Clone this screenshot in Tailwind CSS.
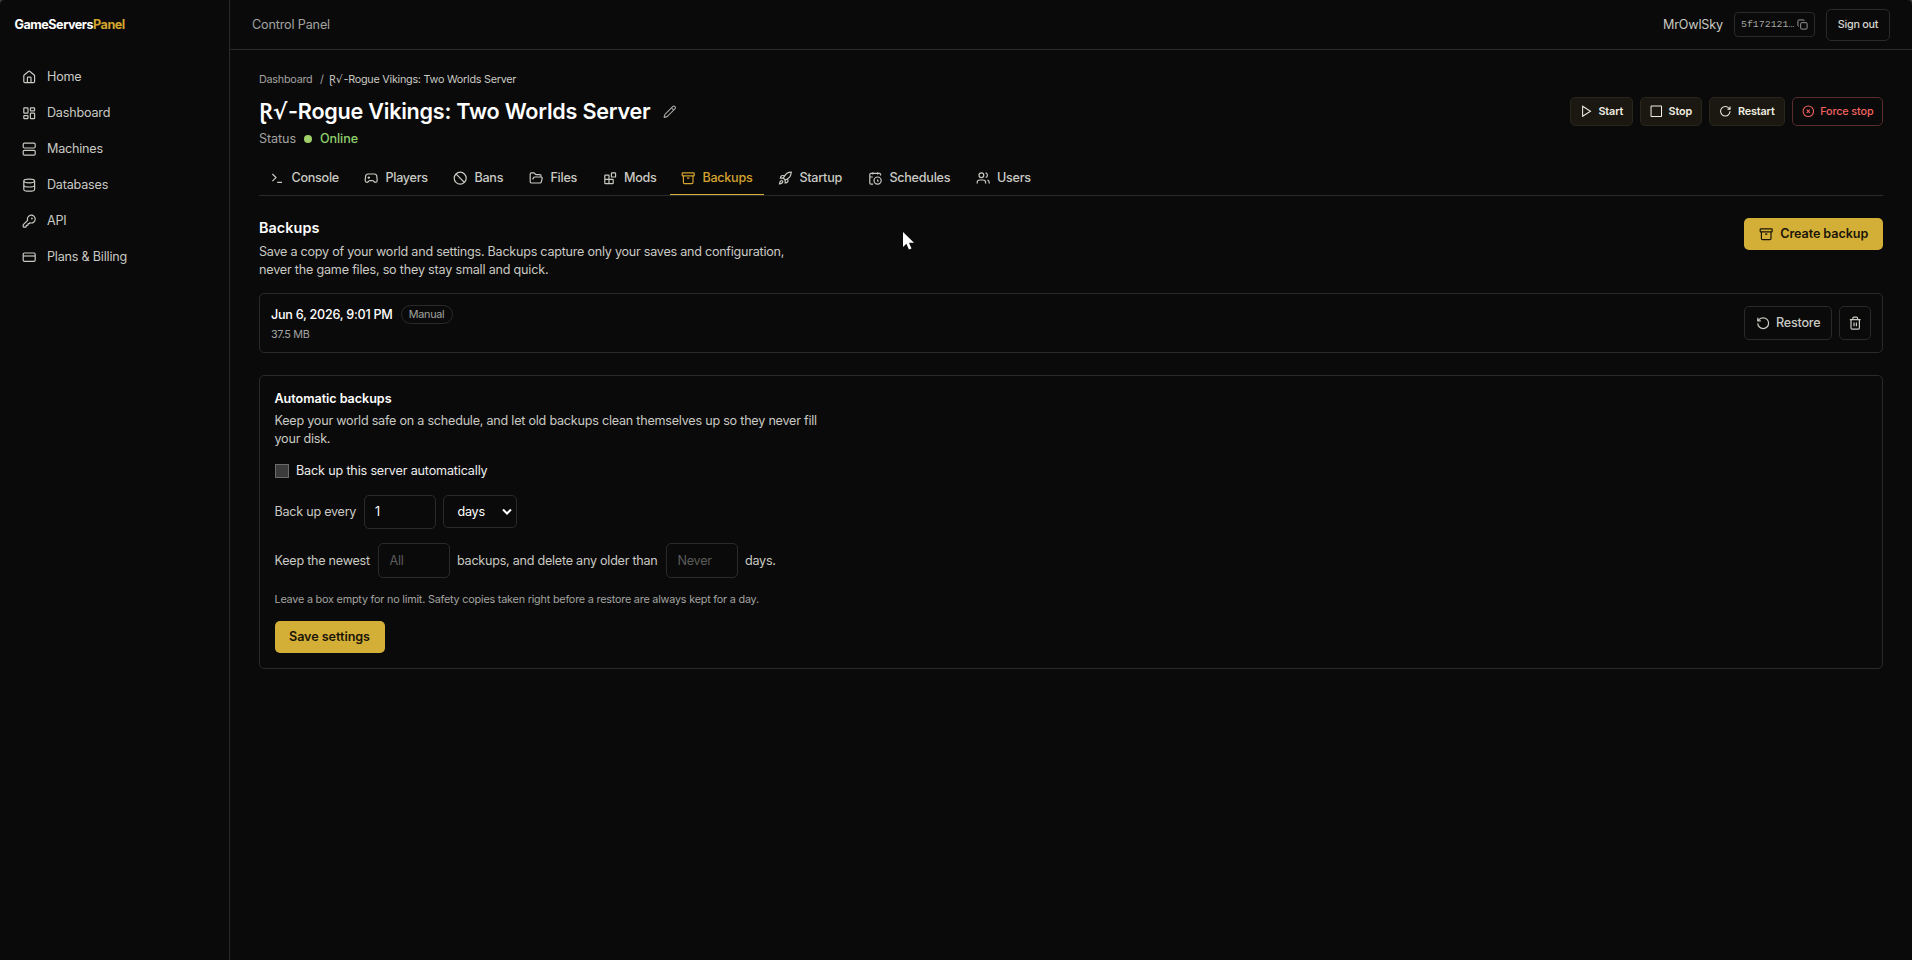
<!DOCTYPE html>
<html lang="en">
<head>
<meta charset="utf-8">
<title>GameServersPanel</title>
<script src="https://cdn.jsdelivr.net/npm/@tailwindcss/browser@4"></script>
</head>
<body class="bg-[#0a0a0a] font-['Inter',sans-serif] text-[12.6px] leading-[18px] tracking-[-0.25px] text-[#c9c9c3] overflow-hidden">
<svg class="hidden">
  <defs>
    <symbol id="home" viewBox="0 0 24 24"><path d="M15 21v-8a1 1 0 0 0-1-1h-4a1 1 0 0 0-1 1v8"/><path d="M3 10a2 2 0 0 1 .709-1.528l7-6a2 2 0 0 1 2.582 0l7 6A2 2 0 0 1 21 10v9a2 2 0 0 1-2 2H5a2 2 0 0 1-2-2z"/></symbol>
    <symbol id="dash" viewBox="0 0 24 24"><rect width="7" height="9" x="3" y="3" rx="1"/><rect width="7" height="5" x="14" y="3" rx="1"/><rect width="7" height="9" x="14" y="12" rx="1"/><rect width="7" height="5" x="3" y="16" rx="1"/></symbol>
    <symbol id="server" viewBox="0 0 24 24"><rect width="20" height="8" x="2" y="2" rx="2"/><rect width="20" height="8" x="2" y="14" rx="2"/><path d="M6 6h.01M6 18h.01"/></symbol>
    <symbol id="db" viewBox="0 0 24 24"><ellipse cx="12" cy="5" rx="9" ry="3"/><path d="M3 5v14a9 3 0 0 0 18 0V5"/><path d="M3 12a9 3 0 0 0 18 0"/></symbol>
    <symbol id="key" viewBox="0 0 24 24"><path d="M2.586 17.414A2 2 0 0 0 2 18.828V21a1 1 0 0 0 1 1h3a1 1 0 0 0 1-1v-1a1 1 0 0 1 1-1h1a1 1 0 0 0 1-1v-1a1 1 0 0 1 1-1h.172a2 2 0 0 0 1.414-.586l.814-.814a6.5 6.5 0 1 0-4-4z"/><circle cx="16.5" cy="7.5" r=".5" fill="currentColor"/></symbol>
    <symbol id="card" viewBox="0 0 24 24"><rect width="20" height="14" x="2" y="5" rx="2"/><path d="M2 10h20"/></symbol>
    <symbol id="copy" viewBox="0 0 24 24"><rect width="14" height="14" x="8" y="8" rx="2"/><path d="M4 16c-1.1 0-2-.9-2-2V4c0-1.100.9-2 2-2h10c1.100 0 2 .9 2 2"/></symbol>
    <symbol id="pencil" viewBox="0 0 24 24"><path d="M21.174 6.812a1 1 0 0 0-3.986-3.987L3.842 16.174a2 2 0 0 0-.5.83l-1.321 4.352a.5.5 0 0 0 .623.622l4.353-1.320a2 2 0 0 0 .83-.497z"/><path d="m15 5 4 4"/></symbol>
    <symbol id="term" viewBox="0 0 24 24"><path d="m4 17 6-6-6-6M12 19h8"/></symbol>
    <symbol id="pad" viewBox="0 0 24 24"><path d="M6 11h4M8 9v4M15 12h.01M18 10h.01"/><path d="M17.320 5H6.680a4 4 0 0 0-3.978 3.590c-.006.052-.010.101-.017.152C2.604 9.416 2 14.456 2 16a3 3 0 0 0 3 3c1 0 1.500-.5 2-1l1.414-1.414A2 2 0 0 1 9.828 16h4.344a2 2 0 0 1 1.414.586L17 18c.5.5 1 1 2 1a3 3 0 0 0 3-3c0-1.545-.604-6.584-.685-7.258-.007-.050-.011-.100-.017-.151A4 4 0 0 0 17.320 5z"/></symbol>
    <symbol id="ban" viewBox="0 0 24 24"><circle cx="12" cy="12" r="10"/><path d="m4.900 4.900 14.200 14.200"/></symbol>
    <symbol id="folder" viewBox="0 0 24 24"><path d="m6 14 1.500-2.900A2 2 0 0 1 9.240 10H20a2 2 0 0 1 1.940 2.500l-1.540 6a2 2 0 0 1-1.950 1.500H4a2 2 0 0 1-2-2V5a2 2 0 0 1 2-2h3.900a2 2 0 0 1 1.690.9l.81 1.200a2 2 0 0 0 1.670.9H18a2 2 0 0 1 2 2v2"/></symbol>
    <symbol id="blocks" viewBox="0 0 24 24"><rect width="7" height="7" x="14" y="3" rx="1"/><path d="M10 21V8a1 1 0 0 0-1-1H4a1 1 0 0 0-1 1v12a1 1 0 0 0 1 1h12a1 1 0 0 0 1-1v-5a1 1 0 0 0-1-1H3"/></symbol>
    <symbol id="archive" viewBox="0 0 24 24"><rect width="20" height="5" x="2" y="3" rx="1"/><path d="M4 8v11a2 2 0 0 0 2 2h12a2 2 0 0 0 2-2V8M10 12h4"/></symbol>
    <symbol id="rocket" viewBox="0 0 24 24"><path d="M4.500 16.500c-1.500 1.260-2 5-2 5s3.740-.5 5-2c.71-.84.7-2.130-.090-2.910a2.180 2.180 0 0 0-2.910-.090z"/><path d="m12 15-3-3a22 22 0 0 1 2-3.950A12.880 12.880 0 0 1 22 2c0 2.720-.78 7.500-6 11a22.350 22.350 0 0 1-4 2z"/><path d="M9 12H4s.55-3.030 2-4c1.620-1.080 5 0 5 0M12 15v5s3.030-.55 4-2c1.080-1.620 0-5 0-5"/></symbol>
    <symbol id="sched" viewBox="0 0 24 24"><path d="M21 7.500V6a2 2 0 0 0-2-2H5a2 2 0 0 0-2 2v14a2 2 0 0 0 2 2h3.500M16 2v4M8 2v4M3 10h5M17.500 17.500 16 16.300V14"/><circle cx="16" cy="16" r="6"/></symbol>
    <symbol id="users" viewBox="0 0 24 24"><path d="M16 21v-2a4 4 0 0 0-4-4H6a4 4 0 0 0-4 4v2"/><circle cx="9" cy="7" r="4"/><path d="M22 21v-2a4 4 0 0 0-3-3.870M16 3.130a4 4 0 0 1 0 7.750"/></symbol>
    <symbol id="play" viewBox="0 0 24 24"><path d="m5 2.500 15 9.500-15 9.500z"/></symbol>
    <symbol id="square" viewBox="0 0 24 24"><rect width="20" height="20" x="2" y="2" rx="1"/></symbol>
    <symbol id="cw" viewBox="0 0 24 24"><path d="M21 12a9 9 0 1 1-9-9c2.520 0 4.930 1 6.740 2.740L21 8"/><path d="M21 3v5h-5"/></symbol>
    <symbol id="ccw" viewBox="0 0 24 24"><path d="M3 12a9 9 0 1 0 9-9 9.750 9.750 0 0 0-6.740 2.740L3 8"/><path d="M3 3v5h5"/></symbol>
    <symbol id="cx" viewBox="0 0 24 24"><circle cx="12" cy="12" r="10"/><path d="m15 9-6 6M9 9l6 6"/></symbol>
    <symbol id="trash" viewBox="0 0 24 24"><path d="M3 6h18M19 6v14a2 2 0 0 1-2 2H7a2 2 0 0 1-2-2V6M8 6V4a2 2 0 0 1 2-2h4a2 2 0 0 1 2 2v2M10 11v6M14 11v6"/></symbol>
  </defs>
</svg>
<div class="flex h-[960px] w-[1912px]">
  <aside class="w-[230px] shrink-0 border-r border-[#2a2a2a]">
    <div class="flex h-[50px] items-center pl-[14.500px] font-bold tracking-[-0.48px] text-white">GameServers<span class="text-[#d4a42f]">Panel</span></div>
    <nav class="flex flex-col pt-[9px] pl-[22px] [&_a]:flex [&_a]:h-9 [&_a]:items-center [&_a]:gap-[10.600px] [&_svg]:size-[14.400px] [&_svg]:fill-none [&_svg]:stroke-current [&_svg]:stroke-2 tracking-[-0.200px]">
      <a><svg><use href="#home"/></svg>Home</a>
      <a><svg><use href="#dash"/></svg>Dashboard</a>
      <a><svg><use href="#server"/></svg>Machines</a>
      <a><svg><use href="#db"/></svg>Databases</a>
      <a><svg><use href="#key"/></svg>API</a>
      <a><svg><use href="#card"/></svg>Plans &amp; Billing</a>
    </nav>
  </aside>
  <div class="min-w-0 flex-1">
    <header class="flex h-[50px] items-center border-b border-[#2a2a2a] pl-[22px] pr-[22px]">
      <span class="mr-auto text-[#a3a3a0] tracking-[-0.150px]">Control Panel</span>
      <span class="mr-[11px] tracking-[-0.150px]">MrOwlSky</span>
      <div class="mr-[11px] flex h-[25px] w-[81px] items-center justify-between rounded-[4px] border border-[#2a2a2a] pl-[6px] pr-[6px] text-[#a3a3a0]">
        <span class="font-['Liberation_Mono',monospace] text-[9.900px] tracking-[0px]">5f172121…</span>
        <svg class="size-[11px] fill-none stroke-current stroke-2"><use href="#copy"/></svg>
      </div>
      <button class="h-[32px] w-[64px] rounded-[5px] border border-[#2a2a2a] text-[10.800px] font-medium text-[#d6d6d0]">Sign out</button>
    </header>
    <main class="pl-[29px] pr-[29px] pt-[22px]">
      <div class="flex h-[15px] items-center text-[10.800px] text-[#a3a3a0]">
        <span class="w-[61px]">Dashboard</span><span class="w-[9px]">/</span>
        <span class="mb-[2px] flex items-baseline text-[#c9c9c3] leading-[15px]"><span class="w-[14.500px] whitespace-nowrap tracking-[0px] font-['Noto_Sans',sans-serif]">Ɽ<span class="font-['DejaVu_Sans',sans-serif]">√</span></span>-Rogue Vikings: Two Worlds Server</span>
      </div>
      <div class="flex items-start justify-between">
        <div>
          <div class="mt-[11px] flex h-[27px] items-center">
            <h1 class="mb-[2px] flex items-baseline text-[21.600px] font-semibold leading-[27px] tracking-[-0.240px] text-white"><span class="w-[29px] whitespace-nowrap tracking-[0px] font-['Noto_Sans',sans-serif]">Ɽ<span class="font-['DejaVu_Sans',sans-serif]">√</span></span>-Rogue Vikings: Two Worlds Server</h1>
            <svg class="ml-[13px] size-[13.500px] fill-none stroke-[#a3a3a0] stroke-2"><use href="#pencil"/></svg>
          </div>
          <div class="mt-[5px] flex h-[18px] items-center text-[#a3a3a0]"><span class="w-[45px] tracking-[-0.100px]">Status</span><span class="mr-[8px] size-[8px] rounded-full bg-[#9fd069]"></span><span class="font-medium tracking-[-0.100px] text-[#8fd06a]">Online</span></div>
        </div>
        <div class="mt-[10px] flex gap-[7px] text-[10.800px] font-semibold [&_button]:flex [&_button]:h-[29px] [&_button]:items-center [&_button]:justify-center [&_button]:gap-[6px] [&_button]:rounded-[5px] [&_button]:border [&_svg]:size-[12.600px] [&_svg]:fill-none [&_svg]:stroke-current [&_svg]:stroke-2 tracking-[-0.120px] text-[#f0eee2]">
          <button class="w-[63px] border-[#29261b] bg-[#1a1810]"><svg><use href="#play"/></svg>Start</button>
          <button class="w-[62px] border-[#29261b] bg-[#1a1810]"><svg><use href="#square"/></svg>Stop</button>
          <button class="w-[76px] border-[#29261b] bg-[#1a1810]"><svg><use href="#cw"/></svg>Restart</button>
          <button class="w-[91px] border-[#5a2c2e] font-medium text-[#f0625f]"><svg><use href="#cx"/></svg>Force stop</button>
        </div>
      </div>
      <nav class="mt-[12px] flex h-[36px] border-b border-[#2a2a2a] text-[#c9c9c3] [&_a]:flex [&_a]:h-[35px] [&_a]:shrink-0 [&_a]:items-center [&_a]:gap-[7px] [&_a]:pl-[11px] [&_a]:pt-px [&_svg]:size-[14.400px] [&_svg]:fill-none [&_svg]:stroke-current [&_svg]:stroke-2 tracking-[-0.250px] font-medium">
        <a class="w-[94px]"><svg><use href="#term"/></svg>Console</a>
        <a class="w-[89px]"><svg><use href="#pad"/></svg>Players</a>
        <a class="w-[76px]"><svg><use href="#ban"/></svg>Bans</a>
        <a class="w-[73.500px]"><svg><use href="#folder"/></svg>Files</a>
        <a class="w-[78.500px]"><svg><use href="#blocks"/></svg>Mods</a>
        <a class="w-[94px] shadow-[inset_0_-1px_0_#d4af37] text-[#d4a42f]"><svg><use href="#archive"/></svg>Backups</a>
        <a class="ml-[3px] w-[90px]"><svg><use href="#rocket"/></svg>Startup</a>
        <a class="w-[107.500px]"><svg><use href="#sched"/></svg>Schedules</a>
        <a><svg><use href="#users"/></svg>Users</a>
      </nav>
      <section class="mt-[22px] flex items-start justify-between">
        <div>
          <h2 class="h-[20px] text-[14.400px] font-semibold leading-[20px] tracking-[0.050px] text-white">Backups</h2>
          <p class="mt-[5px] w-[540px]">Save a copy of your world and settings. Backups capture only your saves and configuration,<br><span class="tracking-[-0.200px]">never the game files, so they stay small and quick.</span></p>
        </div>
        <button class="flex h-[32px] w-[139px] items-center justify-center gap-[7px] rounded-[5px] bg-[#d4af37] font-semibold tracking-[-0.080px] text-[#1a1508]"><svg class="size-[14.400px] fill-none stroke-current stroke-2"><use href="#archive"/></svg>Create backup</button>
      </section>
      <section class="mt-[14px] flex h-[60px] items-center rounded-[5px] border border-[#2a2a2a] pl-[11px] pr-[11px]">
        <div class="mr-auto">
          <div class="flex h-[20px] items-center gap-[8px]"><span class="font-medium text-white">Jun 6, 2026, 9:01 PM</span><span class="flex h-[19px] w-[52px] items-center justify-center rounded-full border border-[#2a2a2a] text-[10.800px] text-[#a3a3a0]">Manual</span></div>
          <div class="mt-[1px] h-[16px] text-[10.800px] leading-[17px] text-[#a3a3a0] tracking-[-0.350px]">37.5 MB</div>
        </div>
        <button class="flex h-[34px] w-[88px] items-center justify-center gap-[6px] rounded-[5px] border border-[#2a2a2a] font-medium"><svg class="size-[14.400px] fill-none stroke-current stroke-2"><use href="#ccw"/></svg>Restore</button>
        <button class="ml-[7px] flex h-[34px] w-[32px] items-center justify-center rounded-[5px] border border-[#2a2a2a]"><svg class="size-[14.400px] fill-none stroke-current stroke-2"><use href="#trash"/></svg></button>
      </section>
      <section class="mt-[22px] h-[294px] rounded-[5px] border border-[#2a2a2a] pl-[14.500px] pt-[14px]">
        <h3 class="font-semibold tracking-[-0.050px] text-white">Automatic backups</h3>
        <p class="mt-[4px] tracking-[-0.230px]">Keep your world safe on a schedule, and let old backups clean themselves up so they never fill<br>your disk.</p>
        <label class="mt-[14px] flex h-[18px] items-center text-[#ededed] tracking-[-0.160px]"><span class="mr-[7.500px] h-[14px] w-[14px] border border-[#6b6b6b] bg-[#3b3b3b]"></span>Back up this server automatically</label>
        <div class="mt-[15px] flex h-[34px] items-center">
          <span class="w-[89px]">Back up every</span>
          <span class="flex h-[34px] w-[72px] items-center rounded-[5px] border border-[#2a2a2a] pl-[10.500px] text-white">1</span>
          <span class="ml-[7px] flex h-[33px] w-[74px] items-center justify-between self-start rounded-[5px] border border-[#2a2a2a] pl-[14px] pr-[4px] text-white">days<svg viewBox="0 0 10 8" class="w-[10px] fill-none stroke-white stroke-2"><path d="m1 1.500 4 4 4-4"/></svg></span>
        </div>
        <div class="mt-[14px] flex h-[35px] items-center leading-[17px]">
          <span class="w-[103.500px]">Keep the newest</span>
          <span class="flex h-[35px] w-[72px] items-center rounded-[5px] border border-[#2a2a2a] pl-[10.500px] pb-px text-[#5c5c5a]">All</span>
          <span class="ml-[7px] w-[209px]">backups, and delete any older than</span>
          <span class="flex h-[35px] w-[72px] items-center rounded-[5px] border border-[#2a2a2a] pl-[10.500px] pb-px text-[#5c5c5a]">Never</span>
          <span class="ml-[7px]">days.</span>
        </div>
        <p class="mt-[13px] text-[10.800px] tracking-[-0.200px] text-[#a3a3a0]">Leave a box empty for no limit. Safety copies taken right before a restore are always kept for a day.</p>
        <button class="mt-[12px] h-[32px] w-[110px] rounded-[5px] bg-[#d4af37] font-semibold tracking-[-0.050px] text-[#1a1508]">Save settings</button>
      </section>
    </main>
  </div>
</div>
<svg class="absolute left-[902px] top-[231px] h-[20px] w-[13px] fill-white" viewBox="0 0 13 20"><path d="M1 1v15l3.400-3.200 2.500 5.700 2.600-1.100-2.500-5.600H12z"/></svg>
<svg class="absolute left-0 top-0 size-[6px] fill-[#3a3a3a]" viewBox="0 0 6 6"><path d="M0 0h5Q0 0 0 5z"/></svg>
<svg class="absolute left-[1906px] top-0 size-[6px] fill-[#3a3a3a]" viewBox="0 0 6 6"><path d="M6 0H1q5 0 5 5z"/></svg>
</body>
</html>
